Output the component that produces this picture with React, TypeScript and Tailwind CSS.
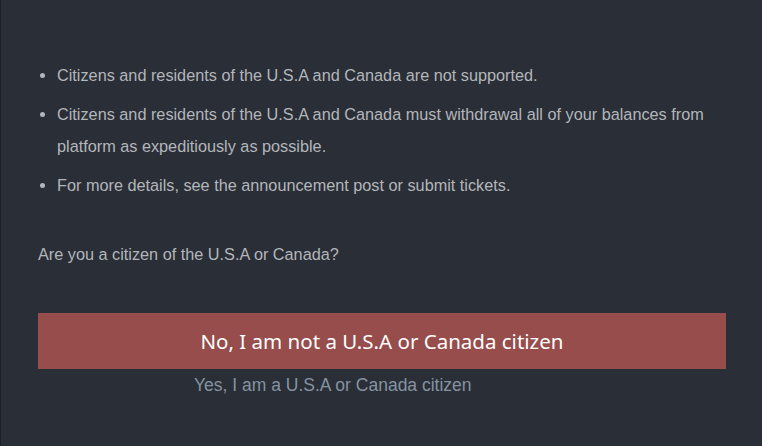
export default function App() {
  const items = [
    "Citizens and residents of the U.S.A and Canada are not supported.",
    "Citizens and residents of the U.S.A and Canada must withdrawal all of your balances from platform as expeditiously as possible.",
    "For more details, see the announcement post or submit tickets.",
  ];

  return (
    <div className="min-h-screen w-full bg-[#2a2e36] border-l border-[#1e2127] font-['Liberation_Sans',Arial,sans-serif]">
      <div className="pl-[37px] pr-[36px] pt-[59px]">
        <ul className="list-disc pl-[19px] text-[16.25px] leading-[32px] text-[#b3b6bb] marker:text-[#b3b6bb]">
          {items.map((t, i) => (
            <li key={i} className="mb-[7px]">
              {t}
            </li>
          ))}
        </ul>

        <p className="mt-[37px] text-[16.25px] leading-[32px] text-[#b3b6bb]">
          Are you a citizen of the U.S.A or Canada?
        </p>

        <button className="mt-[43px] flex h-[56px] w-full items-center justify-center bg-[#964d4b] font-['Noto_Sans',sans-serif] text-[20.5px] text-white">
          No, I am not a U.S.A or Canada citizen
        </button>

        <div className="pl-[156px] pt-[3px] text-[17.5px] leading-[26px] text-[#8593a1]">
          Yes, I am a U.S.A or Canada citizen
        </div>
      </div>
    </div>
  );
}
